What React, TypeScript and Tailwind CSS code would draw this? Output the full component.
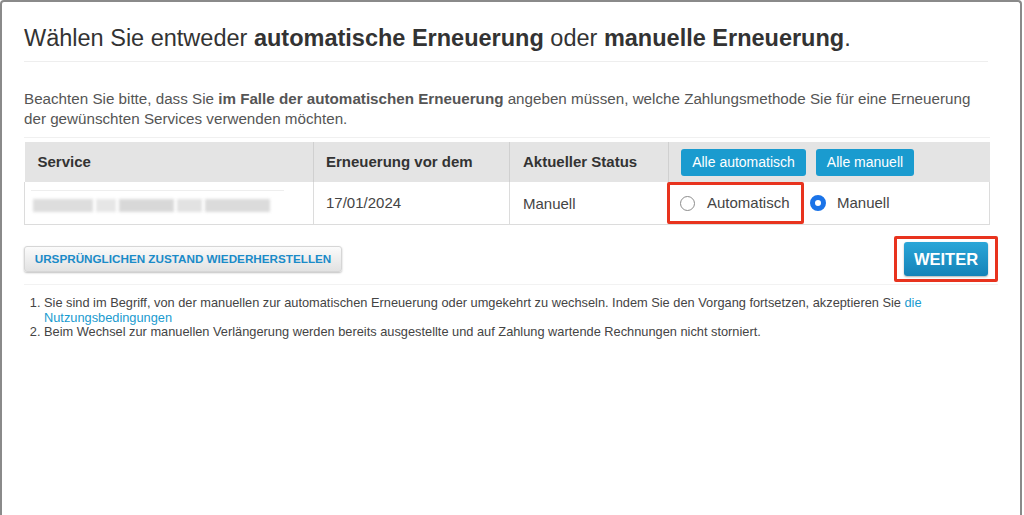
import React from "react";

export default function App() {
  return (
    <div className="w-[1024px] h-[515px] bg-white overflow-hidden" style={{ fontFamily: '"Liberation Sans", Arial, sans-serif' }}>
      <div className="h-[515px] border-l-2 border-t-2 border-r-2 border-[#8a8a8a] rounded-tl-[4px] rounded-tr-[4px] mr-[2px] px-[22px]">
        <div className="pt-[22px] pb-[9px] border-b border-[#eeeeee] mr-[10px]">
          <h1 className="text-[23.5px] leading-[28px] text-[#333333]">
            Wählen Sie entweder <b>automatische Erneuerung</b> oder <b>manuelle Erneuerung</b>.
          </h1>
        </div>
        <p className="mt-[27px] text-[15.2px] leading-[20px] text-[#555555] pr-[20px]">
          Beachten Sie bitte, dass Sie <b>im Falle der automatischen Erneuerung</b> angeben müssen, welche Zahlungsmethode Sie für eine Erneuerung der gewünschten Services verwenden möchten.
        </p>
        <div className="mt-[8px] border-t border-[#f0f0f0] pt-[4px] w-[966px]">
          <table className="w-[966px] border-collapse text-[15px] text-[#444444]">
            <thead>
              <tr className="bg-[#e4e4e4] h-[40px]">
                <th className="text-left font-bold text-[#333333] pl-[13px] w-[289px] border-r border-[#d0d0d0]">Service</th>
                <th className="text-left font-bold text-[#333333] pl-[12px] w-[196px] border-r border-[#d0d0d0]">Erneuerung vor dem</th>
                <th className="text-left font-bold text-[#333333] pl-[13px] w-[159px] border-r border-[#d0d0d0]">Aktueller Status</th>
                <th className="text-left pl-[12px]">
                  <div className="flex gap-[10px]">
                    <span className="bg-[#1a9bcf] text-white font-normal text-[14px] h-[27px] w-[125px] rounded-[3px] flex items-center justify-center">Alle automatisch</span>
                    <span className="bg-[#1a9bcf] text-white font-normal text-[14px] h-[27px] w-[98px] rounded-[3px] flex items-center justify-center">Alle manuell</span>
                  </div>
                </th>
              </tr>
            </thead>
            <tbody>
              <tr className="h-[41px] border-b border-l border-r border-[#dcdcdc]">
                <td className="pl-[6px] border-r border-[#dcdcdc]">
                  <div className="border-t border-[#eeeeee] w-[253px] pt-[8px] pb-[4px]">
                    <div className="flex gap-[3px] h-[13px] w-[237px] ml-[2px] opacity-70">
                      <div className="w-[60px] bg-[#cfcfcf] blur-[1.5px]" />
                      <div className="w-[20px] bg-[#dcdcdc] blur-[1.5px]" />
                      <div className="w-[55px] bg-[#c8c8c8] blur-[1.5px]" />
                      <div className="w-[25px] bg-[#d6d6d6] blur-[1.5px]" />
                      <div className="w-[65px] bg-[#cccccc] blur-[1.5px]" />
                    </div>
                  </div>
                </td>
                <td className="pl-[12px] border-r border-[#dcdcdc]">17/01/2024</td>
                <td className="pl-[13px] pt-[2px] border-r border-[#dcdcdc]">Manuell</td>
                <td className="p-0">
                  <div className="flex items-center">
                    <div className="ml-[-2px] h-[42px] w-[137px] border-[3px] border-[#e8331e] rounded-[2px] flex items-center pl-[10px]">
                      <span className="w-[15px] h-[15px] rounded-full border border-[#8c8c8c] bg-white" />
                      <span className="ml-[12px] text-[#444444]">Automatisch</span>
                    </div>
                    <div className="flex items-center ml-[6px]">
                      <span className="w-[16px] h-[16px] rounded-full border-[5px] border-[#1a73e8] bg-white" />
                      <span className="ml-[11px] text-[#444444]">Manuell</span>
                    </div>
                  </div>
                </td>
              </tr>
            </tbody>
          </table>
        </div>
        <div className="flex items-center justify-between w-[974px] mt-[11px] pb-[2px] border-b border-[#f2f2f2]">
          <div className="h-[26px] w-[318px] rounded-[3px] bg-gradient-to-b from-[#fbfbfb] to-[#e2e2e2] border border-[#d6d6d6] shadow-[0_1px_2px_rgba(0,0,0,0.25)] flex items-center justify-center text-[11.7px] font-bold text-[#1b8bc8]">
            URSPRÜNGLICHEN ZUSTAND WIEDERHERSTELLEN
          </div>
          <div className="border-[3px] border-[#e8331e] rounded-[2px] px-[7px] py-[3px]">
            <div className="h-[34px] w-[84px] rounded-[3px] bg-gradient-to-b from-[#2aa6d8] to-[#1583b8] shadow-[0_1px_2px_rgba(0,0,0,0.3)] flex items-center justify-center text-white font-bold text-[16.5px]">
              WEITER
            </div>
          </div>
        </div>
        <ol className="mt-[11px] text-[12.8px] leading-[14.5px] text-[#444444] list-decimal pl-[20px] pr-[40px]">
          <li>Sie sind im Begriff, von der manuellen zur automatischen Erneuerung oder umgekehrt zu wechseln. Indem Sie den Vorgang fortsetzen, akzeptieren Sie <span className="text-[#1a9bcf]">die Nutzungsbedingungen</span></li>
          <li>Beim Wechsel zur manuellen Verlängerung werden bereits ausgestellte und auf Zahlung wartende Rechnungen nicht storniert.</li>
        </ol>
      </div>
    </div>
  );
}
